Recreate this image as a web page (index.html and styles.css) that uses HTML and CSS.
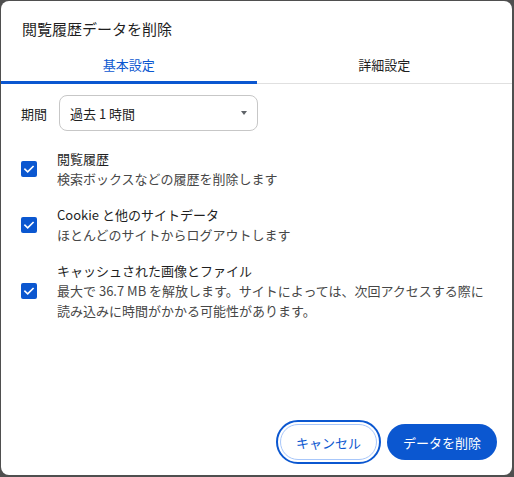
FILE: index.html
```html
<!DOCTYPE html>
<html lang="ja">
<head>
<meta charset="utf-8">
<title>閲覧履歴データを削除</title>
<link rel="stylesheet" href="styles.css">
</head>
<body>
<div class="dialog">
  <h1 class="title">閲覧履歴データを削除</h1>
  <div class="tabs">
    <div class="tab active">基本設定</div>
    <div class="tab">詳細設定</div>
  </div>
  <div class="content">
    <div class="period">
      <span class="period-label">期間</span>
      <div class="select"><span>過去 1 時間</span><span class="arrow"></span></div>
    </div>
    <ul class="items">
      <li class="item">
        <svg class="checkbox" width="16" height="16" viewBox="0 0 16 16"><rect width="16" height="16" rx="2" fill="#0b57d0"/><path d="M4 8.3 L6.7 10.9 L12 5.6" fill="none" stroke="#fff" stroke-width="1.7" stroke-linecap="square"/></svg>
        <div class="item-text">
          <div class="item-title">閲覧履歴</div>
          <div class="item-desc">検索ボックスなどの履歴を削除します</div>
        </div>
      </li>
      <li class="item">
        <svg class="checkbox" width="16" height="16" viewBox="0 0 16 16"><rect width="16" height="16" rx="2" fill="#0b57d0"/><path d="M4 8.3 L6.7 10.9 L12 5.6" fill="none" stroke="#fff" stroke-width="1.7" stroke-linecap="square"/></svg>
        <div class="item-text">
          <div class="item-title">Cookie と他のサイトデータ</div>
          <div class="item-desc">ほとんどのサイトからログアウトします</div>
        </div>
      </li>
      <li class="item">
        <svg class="checkbox" width="16" height="16" viewBox="0 0 16 16"><rect width="16" height="16" rx="2" fill="#0b57d0"/><path d="M4 8.3 L6.7 10.9 L12 5.6" fill="none" stroke="#fff" stroke-width="1.7" stroke-linecap="square"/></svg>
        <div class="item-text">
          <div class="item-title">キャッシュされた画像とファイル</div>
          <div class="item-desc">最大で 36.7 MB を解放します。サイトによっては、次回アクセスする際に読み込みに時間がかかる可能性があります。</div>
        </div>
      </li>
    </ul>
  </div>
  <div class="footer">
    <button class="btn btn-cancel">キャンセル</button>
    <button class="btn btn-primary">データを削除</button>
  </div>
</div>
</body>
</html>
```

FILE: styles.css
```css
html, body {
  margin: 0;
  height: 100%;
}

body {
  box-sizing: border-box;
  height: 477px;
  padding: 1px 2px 2px 1px;
  background: #4f4f4f;
  font-family: "Noto Sans CJK JP", "Noto Sans", sans-serif;
}

.dialog {
  height: 100%;
  background: #ffffff;
  border-radius: 8px;
  display: flex;
  flex-direction: column;
}

.title {
  margin: 0;
  padding: 18px 21px 0;
  font-size: 15px;
  line-height: 20px;
  font-weight: 400;
  color: #1f1f1f;
}

.tabs {
  margin-top: 6px;
  display: flex;
  border-bottom: 1px solid #e0e0e0;
}

.tab {
  flex: 1;
  height: 38px;
  display: flex;
  align-items: center;
  justify-content: center;
  font-size: 13px;
  color: #1f1f1f;
  position: relative;
}

.tab.active {
  color: #0b57d0;
}

.tab.active::after {
  content: "";
  position: absolute;
  left: 0;
  right: 0;
  bottom: -1px;
  height: 3px;
  background: #0b57d0;
}

.content {
  padding: 11px 24px 0 20px;
}

.period {
  display: flex;
  align-items: center;
  gap: 12px;
}

.period-label {
  width: 26px;
  font-size: 13px;
  color: #1f1f1f;
}

.select {
  box-sizing: border-box;
  width: 199px;
  height: 36px;
  border: 1px solid #c7c7c7;
  border-radius: 8px;
  padding: 0 10px;
  display: flex;
  align-items: center;
  justify-content: space-between;
  font-size: 13px;
  color: #1f1f1f;
}

.arrow {
  width: 0;
  height: 0;
  border-left: 3.5px solid transparent;
  border-right: 3.5px solid transparent;
  border-top: 4px solid #5f6368;
}

.items {
  list-style: none;
  margin: 18px 0 0;
  padding: 0;
  display: flex;
  flex-direction: column;
  gap: 16px;
}

.item {
  display: flex;
  align-items: center;
  gap: 20px;
}

.checkbox {
  flex: none;
}

.item-text {
  font-size: 13px;
  line-height: 20px;
}

.item-title {
  color: #1f1f1f;
}

.item-desc {
  color: #474747;
}

.footer {
  margin-top: auto;
  display: flex;
  justify-content: flex-end;
  gap: 10px;
  padding: 0 15px 15px;
}

.btn {
  height: 36px;
  border-radius: 18px;
  font-family: "Noto Sans CJK JP", "Noto Sans", sans-serif;
  font-size: 13px;
  font-weight: 400;
  cursor: pointer;
}

.btn-cancel {
  background: #ffffff;
  border: 1px solid #a8c7fa;
  color: #0b57d0;
  padding: 0 15px;
  outline: 2px solid #0b57d0;
  outline-offset: 2px;
}

.btn-primary {
  background: #0b57d0;
  border: none;
  color: #ffffff;
  padding: 0 16px;
}
```
